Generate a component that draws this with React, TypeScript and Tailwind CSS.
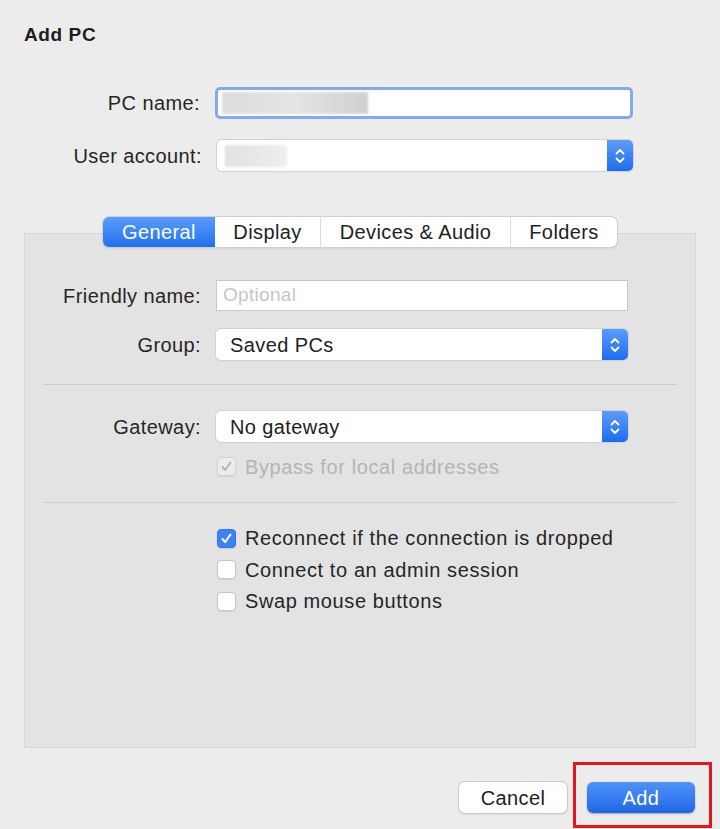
import React from "react";

const font = { fontFamily: '"Liberation Sans", Arial, sans-serif' };

function Stepper() {
  return (
    <div className="w-[26px] self-stretch rounded-r-[5px] bg-gradient-to-b from-[#5b9cf9] to-[#1c6cf0] flex items-center justify-center">
      <svg width="12" height="18" viewBox="0 0 12 18" fill="none" stroke="white" strokeWidth="1.8" strokeLinecap="round" strokeLinejoin="round">
        <path d="M2.5 6.5 L6 3 L9.5 6.5" />
        <path d="M2.5 11.5 L6 15 L9.5 11.5" />
      </svg>
    </div>
  );
}

function Select({ value, w }: { value: string; w: string }) {
  return (
    <div className={`${w} h-[31px] flex bg-white rounded-[5px] shadow-[0_0_0_1px_#d2d2d2,0_1px_1px_rgba(0,0,0,0.15)]`}>
      <div className="flex-1 flex items-center pl-[14px] text-[20px] tracking-[0.4px] text-[#222]">{value}</div>
      <Stepper />
    </div>
  );
}

function Row({ label, labelW, children }: { label: string; labelW: string; children: React.ReactNode }) {
  return (
    <div className="flex items-center">
      <div className={`${labelW} text-right pr-[15px] text-[20px] tracking-[0.4px] text-[#262626]`}>{label}</div>
      {children}
    </div>
  );
}

function Check({ checked, disabled, label }: { checked?: boolean; disabled?: boolean; label: string }) {
  let box = "bg-white border border-[#c6c6c6]";
  if (checked && !disabled) box = "bg-[#3b82f6] border border-[#2f74ee]";
  if (disabled) box = "bg-[#ececec] border border-[#d2d2d2]";
  return (
    <div className="flex items-center gap-[9px] h-[31.5px]">
      <div className={`w-[19px] h-[19px] rounded-[4px] flex items-center justify-center shadow-[0_1px_1px_rgba(0,0,0,0.08)] ${box}`}>
        {checked && (
          <svg width="13" height="13" viewBox="0 0 13 13" fill="none" stroke={disabled ? "#b5b5b5" : "white"} strokeWidth="2" strokeLinecap="round" strokeLinejoin="round">
            <path d="M2.5 7 L5.2 10 L10.5 2.5" />
          </svg>
        )}
      </div>
      <span className={`text-[20px] tracking-[0.6px] ${disabled ? "text-[#b4b4b4]" : "text-[#262626]"}`}>{label}</span>
    </div>
  );
}

export default function App() {
  return (
    <div className="relative w-[720px] h-[829px] bg-[#ececec] overflow-hidden" style={font}>
      <div className="pl-[24px] pt-[24px] text-[19px] tracking-[0.6px] font-bold text-[#1e1e1e] leading-[22px]">Add PC</div>

      <div className="mt-[41px] flex flex-col gap-[21px]">
        <Row label="PC name:" labelW="w-[215px]">
          <div className="w-[418px] h-[32px] rounded-[5px] border-[3px] border-[#86a9ec] bg-white flex items-center pl-[4px]">
            <div className="w-[146px] h-[22px] bg-gradient-to-r from-[#dcdcdc] via-[#e4e4e4] to-[#d0d0d0] blur-[1px]" />
          </div>
        </Row>
        <Row label="User account:" labelW="w-[217px]">
          <div className="w-[416px] h-[31px] flex bg-white rounded-[5px] shadow-[0_0_0_1px_#d2d2d2,0_1px_1px_rgba(0,0,0,0.15)]">
            <div className="flex-1 flex items-center pl-[8px]">
              <div className="w-[62px] h-[22px] bg-gradient-to-r from-[#e2e2e2] to-[#eeeeee] blur-[1px]" />
            </div>
            <Stepper />
          </div>
        </Row>
      </div>

      <div className="mt-[46px] relative z-10 flex justify-center">
        <div className="flex h-[30px] rounded-[6px] bg-white shadow-[0_0_0_1px_#cfcfcf,0_1px_2px_rgba(0,0,0,0.2)] text-[20px] tracking-[0.4px] text-[#222]">
          <div className="w-[112px] flex items-center justify-center rounded-l-[6px] bg-gradient-to-b from-[#5a9cf8] to-[#2170f0] text-white">General</div>
          <div className="w-[106px] flex items-center justify-center border-r border-[#dedede]">Display</div>
          <div className="w-[190px] flex items-center justify-center border-r border-[#dedede]">Devices &amp; Audio</div>
          <div className="w-[106px] flex items-center justify-center">Folders</div>
        </div>
      </div>

      <div className="mx-[24px] -mt-[14px] h-[515px] bg-[#e3e3e3] border border-[#d6d6d6] pt-[46px]">
        <div className="flex flex-col gap-[18px]">
          <Row label="Friendly name:" labelW="w-[191px]">
            <div className="w-[412px] h-[31px] bg-white border border-[#c9c9c9] flex items-center pl-[6px] text-[19px] tracking-[0.3px] text-[#c6c6c6]">Optional</div>
          </Row>
          <Row label="Group:" labelW="w-[191px]">
            <Select value="Saved PCs" w="w-[412px]" />
          </Row>
        </div>
        <div className="mx-[18px] mt-[24px] h-px bg-[#cdcdcd]" />
        <div className="mt-[26px]">
          <Row label="Gateway:" labelW="w-[191px]">
            <Select value="No gateway" w="w-[412px]" />
          </Row>
        </div>
        <div className="pl-[192px] mt-[9px]">
          <Check checked disabled label="Bypass for local addresses" />
        </div>
        <div className="mx-[18px] mt-[19px] h-px bg-[#cdcdcd]" />
        <div className="pl-[192px] mt-[20px] flex flex-col">
          <Check checked label="Reconnect if the connection is dropped" />
          <Check label="Connect to an admin session" />
          <Check label="Swap mouse buttons" />
        </div>
      </div>

      <div className="mt-[34px] pr-[25px] flex justify-end gap-[20px]">
        <button className="w-[108px] h-[31px] rounded-[6px] bg-white text-[20px] tracking-[0.4px] text-[#222] shadow-[0_0_0_1px_#cbcbcb,0_1px_2px_rgba(0,0,0,0.2)]">Cancel</button>
        <button className="w-[108px] h-[31px] rounded-[6px] bg-gradient-to-b from-[#4f93f8] to-[#1e66e6] text-[20px] tracking-[0.4px] text-white shadow-[0_1px_2px_rgba(0,0,0,0.3)]">Add</button>
      </div>

      <div className="absolute left-[573px] top-[762px] w-[139px] h-[66px] border-[3px] border-[#e5161d]" />
    </div>
  );
}
